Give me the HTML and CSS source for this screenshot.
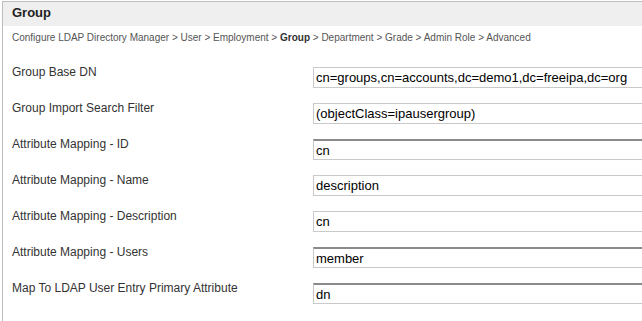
FILE: index.html
```html
<!DOCTYPE html>
<html lang="en">
<head>
    <meta charset="UTF-8">
    <title>Group</title>
    <link rel="stylesheet" href="styles.css">
</head>
<body>
    <div class="panel">
        <div class="panel-header">Group</div>
        <div class="breadcrumb">
            Configure LDAP Directory Manager &gt; User &gt; Employment &gt; <strong>Group</strong> &gt; Department &gt; Grade &gt; Admin Role &gt; Advanced
        </div>

        <div class="form">
            <div class="form-row">
                <label>Group Base DN</label>
                <input type="text" value="cn=groups,cn=accounts,dc=demo1,dc=freeipa,dc=org">
            </div>
            <div class="form-row">
                <label>Group Import Search Filter</label>
                <input type="text" value="(objectClass=ipausergroup)">
            </div>
            <div class="form-row">
                <label>Attribute Mapping - ID</label>
                <input type="text" class="inset" value="cn">
            </div>
            <div class="form-row">
                <label>Attribute Mapping - Name</label>
                <input type="text" value="description">
            </div>
            <div class="form-row">
                <label>Attribute Mapping - Description</label>
                <input type="text" value="cn">
            </div>
            <div class="form-row">
                <label>Attribute Mapping - Users</label>
                <input type="text" class="inset" value="member">
            </div>
            <div class="form-row">
                <label>Map To LDAP User Entry Primary Attribute</label>
                <input type="text" class="inset" value="dn">
            </div>
        </div>
    </div>
</body>
</html>
```

FILE: styles.css
```css
html, body {
    height: 100%;
    overflow: hidden;
}

body {
    margin: 0;
    padding: 1px 0 0 2px;
    box-sizing: border-box;
    font-family: "Liberation Sans", Arial, Helvetica, sans-serif;
    background-color: #fff;
}

.panel {
    border-left: 1px solid #bdbdbd;
    border-top: 1px solid #bdbdbd;
    height: 100%;
    box-sizing: border-box;
    overflow: hidden; /* the inputs run on past the right edge */
}

.panel-header {
    background-color: #efefef;
    height: 24px;
    line-height: 22px;
    padding-left: 9px;
    font-size: 13px;
    font-weight: bold;
    color: #222;
}

.breadcrumb {
    margin-top: 5px;
    padding-left: 9px;
    font-size: 10px;
    line-height: 14px;
    color: #555;
}

.breadcrumb strong {
    color: #333;
}

.form {
    margin-top: 22px;
}

.form-row {
    display: flex;
    align-items: flex-start;
    height: 36px;
}

.form-row label {
    flex: 0 0 301px;
    padding-left: 9px;
    box-sizing: border-box;
    margin-top: -2px;
    font-size: 12px;
    line-height: 14px;
    color: #333;
}

.form-row input {
    flex: 0 0 420px;
    height: 21px;
    box-sizing: border-box;
    margin: 0 0 0 9px;
    padding: 0 2px;
    border: 1px solid #c9c9c9;
    border-radius: 0;
    font-family: "Liberation Sans", Arial, Helvetica, sans-serif;
    font-size: 13px;
    color: #000;
    background-color: #fff;
    outline: none;
}

.form-row input.inset {
    border-top: 2px solid #8a8a8a;
}
```
